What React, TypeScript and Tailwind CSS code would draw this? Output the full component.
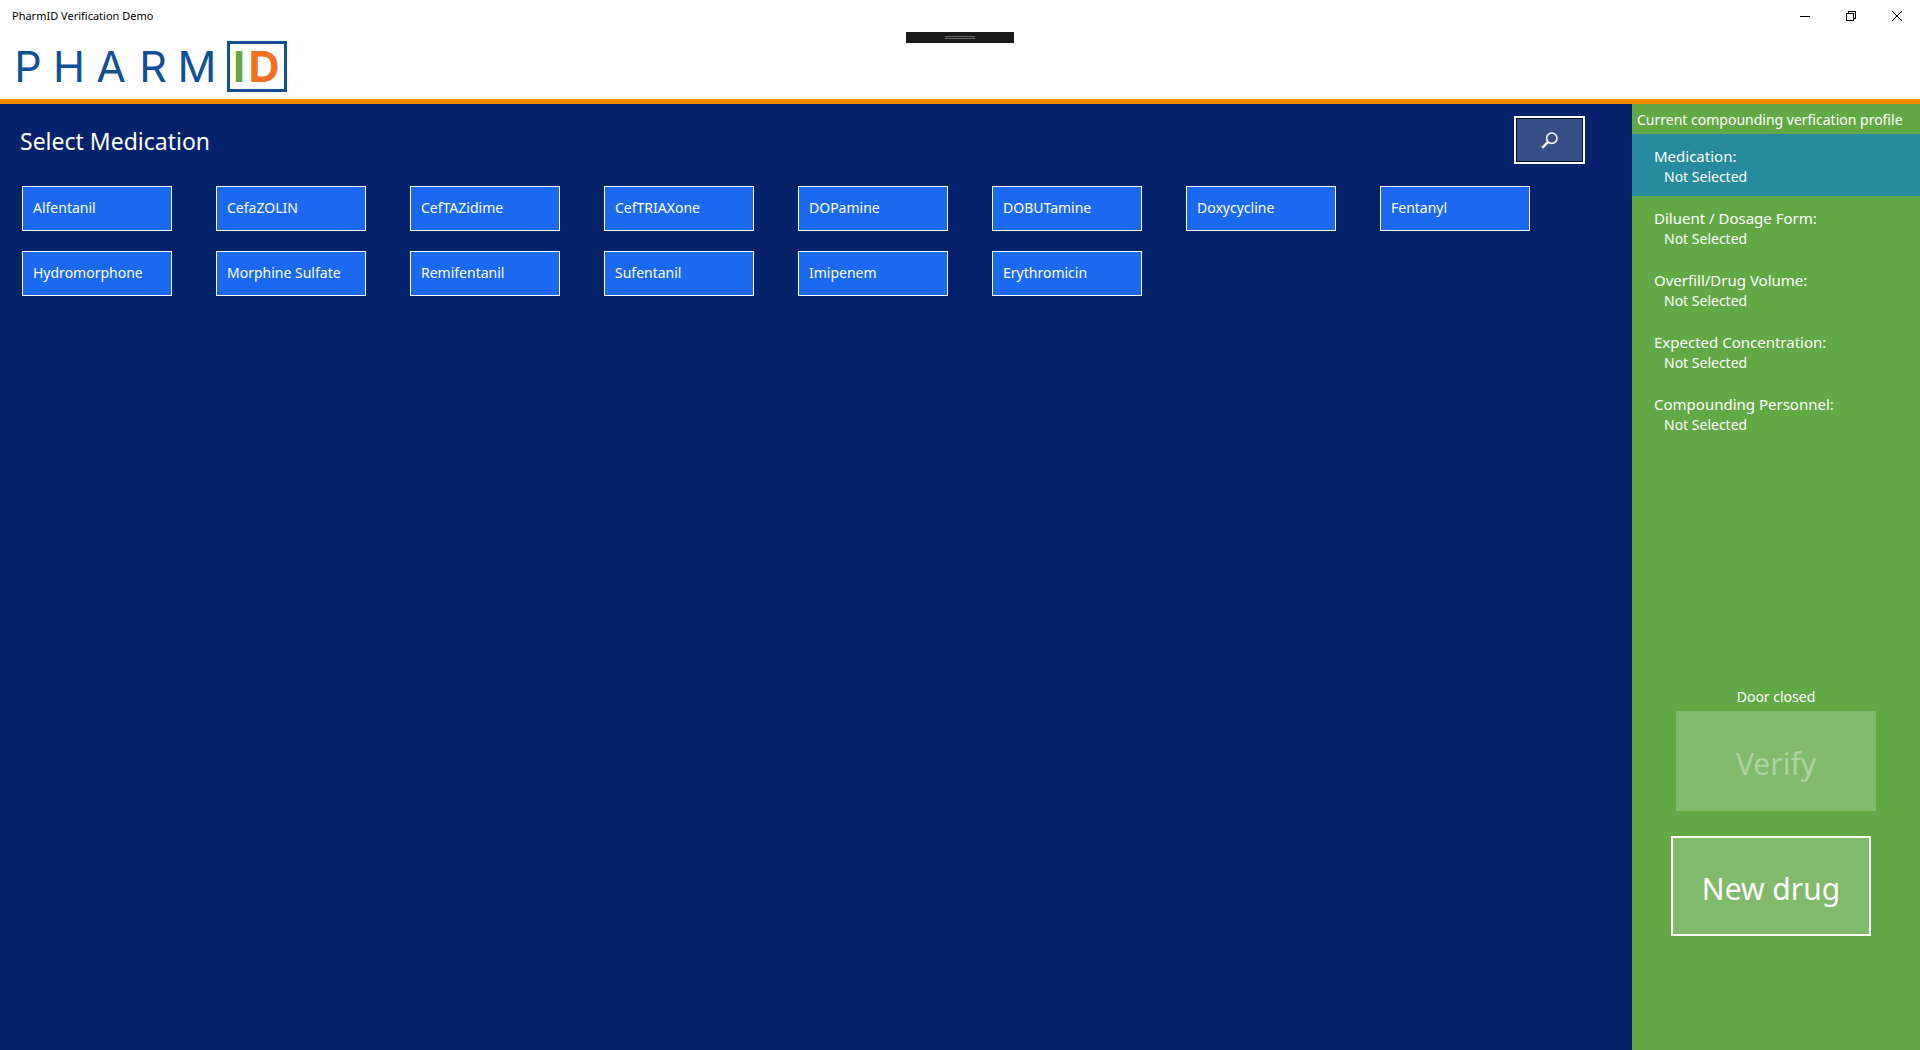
const medications = [
  'Alfentanil',
  'CefaZOLIN',
  'CefTAZidime',
  'CefTRIAXone',
  'DOPamine',
  'DOBUTamine',
  'Doxycycline',
  'Fentanyl',
  'Hydromorphone',
  'Morphine Sulfate',
  'Remifentanil',
  'Sufentanil',
  'Imipenem',
  'Erythromicin',
];

const profile = [
  { label: 'Medication:', value: 'Not Selected', active: true },
  { label: 'Diluent / Dosage Form:', value: 'Not Selected', active: false },
  { label: 'Overfill/Drug Volume:', value: 'Not Selected', active: false },
  { label: 'Expected Concentration:', value: 'Not Selected', active: false },
  { label: 'Compounding Personnel:', value: 'Not Selected', active: false },
];

function Logo() {
  return (
    <svg width="280" height="60" viewBox="0 0 280 60" role="img" aria-label="PharmID" className="font-['Inter',sans-serif]">
      <text x="16 57 99 141 185" y="45" fontSize="43" textAnchor="middle" fill="#0f5096">
        PHARM
      </text>
      <rect x="216.5" y="5.5" width="57" height="48" fill="none" stroke="#0f5096" strokeWidth="3" />
      <text y="45" fontSize="43" fontWeight="700" textAnchor="middle">
        <tspan x="227" fill="#62a945">I</tspan>
        <tspan x="252" fill="#f37021">D</tspan>
      </text>
    </svg>
  );
}

function TitleBar() {
  return (
    <div className="flex h-8 items-center justify-between pl-3">
      <h1 className="text-[11px]">PharmID Verification Demo</h1>
      <div className="flex">
        <button aria-label="Minimize" className="flex h-8 w-[46px] items-center justify-center">
          <svg width="10" height="10" viewBox="0 0 10 10" shapeRendering="crispEdges">
            <path d="M0 5.5H10" stroke="#000" />
          </svg>
        </button>
        <button aria-label="Restore" className="flex h-8 w-[46px] items-center justify-center">
          <svg width="10" height="10" viewBox="0 0 10 10" fill="none" stroke="#000" shapeRendering="crispEdges">
            <path d="M.5 2.5H7.5V9.5H.5ZM2.5 2.5V.5H9.5V7.5H7.5" />
          </svg>
        </button>
        <button aria-label="Close" className="flex h-8 w-[46px] items-center justify-center">
          <svg width="10" height="10" viewBox="0 0 10 10" stroke="#000">
            <path d="M0 0L10 10M10 0L0 10" />
          </svg>
        </button>
      </div>
    </div>
  );
}

export default function App() {
  return (
    <div className="flex min-h-screen flex-col bg-white font-['Noto_Sans',sans-serif] text-black">
      <header className="relative border-b-[5px] border-[#ff8c00]">
        <TitleBar />
        <div className="flex pt-[5px] pb-[2px] pl-3">
          <Logo />
        </div>
        <div className="absolute top-8 left-1/2 flex h-[11px] w-[108px] -translate-x-1/2 flex-col items-center justify-center gap-px bg-[#1a1a1a]">
          <div className="h-px w-[30px] bg-[#6a6a6a]" />
          <div className="h-px w-[30px] bg-[#6a6a6a]" />
        </div>
      </header>

      <div className="flex grow text-white">
        <main className="grow bg-[#05226a]">
          <div className="flex items-start justify-between pt-3 pr-[47px] pl-5">
            <h2 className="pt-1 text-[23px] leading-[42px]">Select Medication</h2>
            <button
              aria-label="Search"
              className="flex h-12 w-[71px] items-center justify-center border-2 border-white bg-[#3a4e88] ring-1 ring-[#030d2b] ring-inset"
            >
              <svg width="17" height="17" viewBox="0 0 17 17" fill="none" stroke="#fff">
                <circle cx="10.8" cy="6.2" r="5.2" strokeWidth="1.5" />
                <path d="M7 10L1.2 15.8" strokeWidth="2.4" />
              </svg>
            </button>
          </div>
          <ul className="flex flex-wrap gap-x-11 gap-y-5 pt-[22px] pl-[22px]">
            {medications.map((name) => (
              <li key={name}>
                <button className="flex h-[45px] w-[150px] items-center border border-white bg-[#1a69f0] pb-[2px] pl-[10px] text-sm whitespace-nowrap">
                  {name}
                </button>
              </li>
            ))}
          </ul>
        </main>

        <aside className="flex w-72 shrink-0 flex-col bg-[#62a945]">
          <h2 className="h-[30px] pl-[5px] text-sm leading-8 whitespace-nowrap">Current compounding verfication profile</h2>
          <dl>
            {profile.map((item) => (
              <div
                key={item.label}
                className={item.active ? 'h-[62px] bg-[#278b9e] pt-3 pl-[22px]' : 'h-[62px] pt-3 pl-[22px]'}
              >
                <dt className="text-[15px] leading-5">{item.label}</dt>
                <dd className="pl-[10px] text-sm leading-[22px]">{item.value}</dd>
              </div>
            ))}
          </dl>
          <div className="mt-auto flex flex-col items-center pb-[114px]">
            <p className="text-sm leading-7">Door closed</p>
            <button disabled className="h-[100px] w-[200px] bg-[#82ba6b] pt-[6px] text-3xl text-[#aed3a0]">
              Verify
            </button>
            <button className="mt-[25px] mr-[10px] h-[100px] w-[200px] border-2 border-white bg-[#82ba6b] pt-[6px] text-3xl">
              New drug
            </button>
          </div>
        </aside>
      </div>
    </div>
  );
}
